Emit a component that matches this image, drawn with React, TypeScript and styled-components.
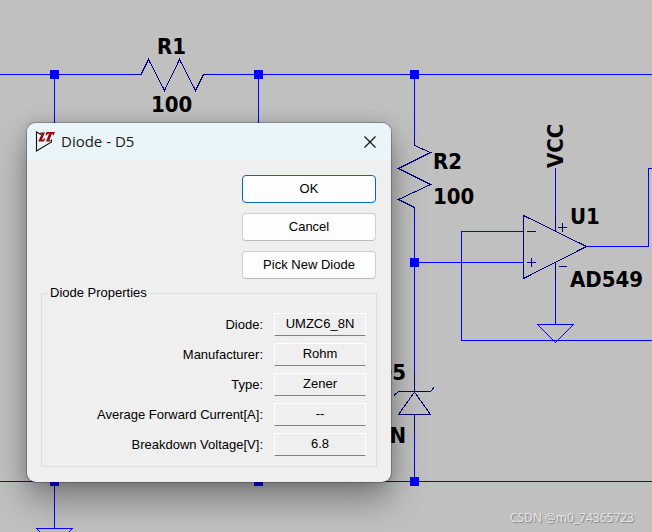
import React, { useId } from "react";
import styled, { createGlobalStyle } from "styled-components";

const GlobalStyle = createGlobalStyle`
  *, *::before, *::after { box-sizing: border-box; }
  body { margin: 0; background: #c0c0c0; }
`;

const WIRE = "#0000ff";
const SYMBOL = "#000080";

const Workspace = styled.main`
  position: relative;
  min-height: 100vh;
  overflow: hidden;
  background: #c0c0c0;
`;

const SchematicCanvas = styled.svg`
  display: block;
  width: 100%;
  height: 100vh;
  fill: none;
  shape-rendering: crispEdges;
`;

const Wires = styled.g`
  stroke: ${WIRE};
`;

const Symbols = styled.g`
  stroke: ${SYMBOL};
`;

const Junction = styled.rect`
  fill: ${WIRE};
`;

const PartLabel = styled.text`
  fill: #000;
  font: bold 22px "DejaVu Sans Condensed", "DejaVu Sans", sans-serif;
`;

const Watermark = styled.div`
  position: absolute;
  right: 18px;
  bottom: 6px;
  color: #e6e6e6;
  font: 12px/16px "Noto Sans", sans-serif;
  text-shadow: 1px 1px 1px #808080;
`;

const DialogWindow = styled.section`
  position: absolute;
  left: 27px;
  top: 123px;
  width: 364px;
  max-width: calc(100% - 54px);
  border-radius: 9px;
  background: #efefef;
  color: #000;
  font: 13px/16px "Liberation Sans", Arial, sans-serif;
  box-shadow:
    0 0 0 1px rgba(0, 0, 0, 0.22),
    0 0 14px rgba(0, 0, 0, 0.16),
    0 18px 34px rgba(0, 0, 0, 0.36);
`;

const TitleBar = styled.header`
  display: flex;
  align-items: center;
  gap: 6px;
  height: 37px;
  padding: 0 12px 0 8px;
  border-radius: 9px 9px 0 0;
  background: #eaf5f9;
`;

const Title = styled.h1`
  flex: 1;
  margin: 0;
  padding-bottom: 2px;
  color: #1a1a1a;
  font: 15px/20px "Open Sans", sans-serif;
`;

const CloseButton = styled.button`
  display: flex;
  padding: 2px;
  border: 0;
  background: none;
`;

const DialogBody = styled.form`
  display: flex;
  flex-direction: column;
  gap: 6px;
  padding: 15px 14px;
`;

const Actions = styled.div`
  display: flex;
  flex-direction: column;
  align-items: flex-end;
  gap: 10px;
  padding-right: 1px;
`;

const ActionButton = styled.button<{ $primary?: boolean }>`
  width: 134px;
  height: 28px;
  padding: 0;
  border: 1px solid ${(p) => (p.$primary ? "#0067c0" : "#d0d0d0")};
  border-bottom-color: ${(p) => (p.$primary ? "#0067c0" : "#bcbcbc")};
  border-radius: 4px;
  background: #fdfdfd;
  color: #000;
  font: inherit;
`;

const PropertyGroup = styled.fieldset`
  display: flex;
  flex-direction: column;
  gap: 7px;
  min-width: 0;
  margin: 0;
  padding: 12px 10px 10px 6px;
  border: 1px solid #dcdcdc;
`;

const GroupTitle = styled.legend`
  padding: 0 2px;
`;

const PropertyRow = styled.div`
  display: grid;
  grid-template-columns: 1fr 92px;
  column-gap: 11px;
  align-items: center;
`;

const PropertyLabel = styled.label`
  text-align: right;
`;

const PropertyValue = styled.input`
  width: 100%;
  height: 23px;
  padding: 0 0 2px;
  border: 1px solid #fff;
  border-bottom-color: #808080;
  border-radius: 0;
  background: #efefef;
  color: #000;
  font: inherit;
  text-align: center;
`;

const properties = [
  { label: "Diode:", value: "UMZC6_8N" },
  { label: "Manufacturer:", value: "Rohm" },
  { label: "Type:", value: "Zener" },
  { label: "Average Forward Current[A]:", value: "--" },
  { label: "Breakdown Voltage[V]:", value: "6.8" },
];

const junctions = [
  [54, 74],
  [258, 74],
  [414, 74],
  [414, 262],
  [54, 481],
  [258, 481],
  [414, 481],
];

function Property({ label, value }: { label: string; value: string }) {
  const id = useId();
  return (
    <PropertyRow>
      <PropertyLabel htmlFor={id}>{label}</PropertyLabel>
      <PropertyValue id={id} value={value} readOnly />
    </PropertyRow>
  );
}

function AppLogo() {
  return (
    <svg width="20" height="22" viewBox="0 0 20 22" aria-hidden="true">
      <path d="M6 3.5 L1.5 1 V20 L16.5 11 V8.5" fill="none" stroke="#111" strokeWidth="1.1" />
      <path d="M5.6 1.6 H10 L7 8.4 H8.6 L9.6 7 L10.4 7.4 L9 10.6 H3.2 L4 8.8 L6.6 3 H5 Z" fill="#8b0f14" />
      <path
        d="M11.4 1 H20 L18.6 4.2 H17.6 V2.8 H17 L14.4 9 H15.8 L15 10.6 H10.8 L11.6 9 L14 2.8 H12.8 L11.8 4.2 H10.4 Z"
        fill="#8b0f14"
      />
    </svg>
  );
}

function Schematic() {
  return (
    <SchematicCanvas role="img" aria-label="Circuit schematic">
      <Wires>
        <path d="M0 74.5 H135 M210 74.5 H415" />
        <line x1="414" y1="74.5" x2="100%" y2="74.5" />
        <line x1="0" y1="481.5" x2="100%" y2="481.5" />
        <line x1="461" y1="340.5" x2="100%" y2="340.5" />
        <line x1="648" y1="168.5" x2="100%" y2="168.5" />
        <path d="M54.5 74 V528 M258.5 74 V481" />
        <path d="M414.5 74 V139 M414.5 212 V372 M414.5 434 V481" />
        <path d="M414 262.5 H523 M523 231.5 H461.5 V341" />
        <path d="M555.5 168 V216 M555.5 278 V324 M587 246.5 H648.5 V168" />
        <path d="M537.5 324.5 H573.5 L555.5 342.5 Z M36.5 528.5 H72.5 L54.5 546.5 Z" />
      </Wires>
      <Symbols>
        <path d="M135 74.5 H141 L148.5 59.5 L164.5 90.5 L179.5 59.5 L195.5 90.5 L203.5 74.5 H210" />
        <path d="M414.5 139 V145.5 L430.5 152.5 L398.5 168.5 L430.5 184.5 L398.5 199.5 L414.5 207.5 V212" />
        <path d="M414.5 372 V391 M394 395.5 L398.5 391.5 H430.5 L434 387.5" />
        <path d="M414.5 392 L398.5 414.5 H430.5 Z M414.5 414 V434" />
        <path d="M523.5 215.5 V278.5 L586.5 246.5 Z M555.5 216 V231 M555.5 262 V278" />
        <path d="M527 231.5 H536 M527 262.5 H536 M531.5 258 V267" />
        <path d="M558 227.5 H567 M562.5 223 V232 M559 266.5 H567" />
      </Symbols>
      {junctions.map(([x, y]) => (
        <Junction key={`${x}-${y}`} x={x - 4} y={y - 4} width="9" height="9" />
      ))}
      <PartLabel x="157" y="54">R1</PartLabel>
      <PartLabel x="151" y="112">100</PartLabel>
      <PartLabel x="433" y="169">R2</PartLabel>
      <PartLabel x="433" y="204">100</PartLabel>
      <PartLabel x="570" y="224">U1</PartLabel>
      <PartLabel x="570" y="287">AD549</PartLabel>
      <PartLabel x="406" y="380" textAnchor="end">D5</PartLabel>
      <PartLabel x="406" y="443" textAnchor="end">UMZC6_8N</PartLabel>
      <PartLabel transform="translate(563 168) rotate(-90)">VCC</PartLabel>
    </SchematicCanvas>
  );
}

function DiodeDialog() {
  return (
    <DialogWindow role="dialog" aria-labelledby="dialog-title">
      <TitleBar>
        <AppLogo />
        <Title id="dialog-title">Diode - D5</Title>
        <CloseButton type="button" aria-label="Close">
          <svg width="14" height="14" viewBox="0 0 14 14" aria-hidden="true">
            <path d="M1.5 1.5 L12.5 12.5 M12.5 1.5 L1.5 12.5" stroke="#111" strokeWidth="1.2" />
          </svg>
        </CloseButton>
      </TitleBar>
      <DialogBody onSubmit={(event) => event.preventDefault()}>
        <Actions>
          <ActionButton $primary type="submit">OK</ActionButton>
          <ActionButton type="button">Cancel</ActionButton>
          <ActionButton type="button">Pick New Diode</ActionButton>
        </Actions>
        <PropertyGroup>
          <GroupTitle>Diode Properties</GroupTitle>
          {properties.map((property) => (
            <Property key={property.label} {...property} />
          ))}
        </PropertyGroup>
      </DialogBody>
    </DialogWindow>
  );
}

export default function App() {
  return (
    <Workspace>
      <GlobalStyle />
      <Schematic />
      <DiodeDialog />
      <Watermark>CSDN @m0_74365723</Watermark>
    </Workspace>
  );
}
